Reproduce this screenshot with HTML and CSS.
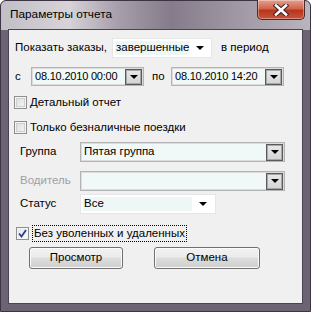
FILE: index.html
```html
<!DOCTYPE html>
<html lang="ru">
<head>
  <meta charset="UTF-8">
  <title>Параметры отчета</title>
  <link rel="stylesheet" href="styles.css">
</head>
<body>
  <div class="window">
    <div class="titlebar">
      <span class="title">Параметры отчета</span>
      <button class="close" aria-label="Закрыть">
        <svg width="16" height="12" viewBox="0 0 16 12">
          <path d="M3 1.5 L13 10.5 M13 1.5 L3 10.5" stroke="#3a2626" stroke-width="4.6" stroke-linecap="square"/>
          <path d="M3 1.5 L13 10.5 M13 1.5 L3 10.5" stroke="#fff" stroke-width="2.6" stroke-linecap="square"/>
        </svg>
      </button>
    </div>

    <div class="client">
      <div class="row r1">
        <span>Показать заказы,</span>
        <div class="combo flat w-state">
          <span class="value">завершенные</span>
          <span class="tri"></span>
        </div>
        <span class="after">в период</span>
      </div>

      <div class="row r2">
        <span class="lbl-c">с</span>
        <div class="field date">
          <span class="value">08.10.2010 00:00</span>
          <span class="drop"><span class="tri"></span></span>
        </div>
        <span class="lbl-po">по</span>
        <div class="field date">
          <span class="value">08.10.2010 14:20</span>
          <span class="drop"><span class="tri"></span></span>
        </div>
      </div>

      <label class="row r3 check">
        <span class="box"></span>
        <span>Детальный отчет</span>
      </label>

      <label class="row r4 check">
        <span class="box"></span>
        <span>Только безналичные поездки</span>
      </label>

      <div class="row r5">
        <span class="lbl">Группа</span>
        <div class="field wide">
          <span class="value">Пятая группа</span>
          <span class="drop"><span class="tri"></span></span>
        </div>
      </div>

      <div class="row r6">
        <span class="lbl disabled">Водитель</span>
        <div class="field wide">
          <span class="value"></span>
          <span class="drop"><span class="tri"></span></span>
        </div>
      </div>

      <div class="row r7">
        <span class="lbl">Статус</span>
        <div class="combo flat w-status">
          <span class="value">Все</span>
          <span class="tri"></span>
        </div>
      </div>

      <label class="row r8 check">
        <span class="box checked">
          <svg width="9" height="9" viewBox="0 0 9 9"><path d="M1 4.5 L3.5 7.5 L8 1" fill="none" stroke="#2a3f8f" stroke-width="1.8"/></svg>
        </span>
        <span class="focus">Без уволенных и удаленных</span>
      </label>

      <div class="row buttons">
        <button class="btn btn-view">Просмотр</button>
        <button class="btn btn-cancel">Отмена</button>
      </div>
    </div>
  </div>
</body>
</html>
```

FILE: styles.css
```css
* { box-sizing: border-box; margin: 0; padding: 0; }
html, body { width: 311px; height: 312px; overflow: hidden; background: #fff; }
body { font: 11.5px/1 "Liberation Sans", Arial, sans-serif; color: #000; white-space: nowrap; }

.window {
  width: 311px; height: 312px;
  border: 1px solid #3c3442;
  border-radius: 6px 6px 0 0;
  padding: 0 7px 7px;
  display: flex; flex-direction: column;
  background:
    linear-gradient(90deg, #c2bec6 0%, #d7d3d9 22%, #a69eaa 38%, #857b8a 55%, #9b929f 72%, #bab4bd 100%) top / 100% 29px no-repeat,
    #6d6473;
}

/* title bar */
.titlebar { height: 28px; display: flex; align-items: center; position: relative; }
.title { font-size: 11.8px; padding-left: 2px; margin-top: -1px; color: #000; }
.close {
  position: absolute; top: -1px; right: -2px;
  width: 48px; height: 20px;
  border: 1px solid #4a2a2a; border-top: none;
  border-radius: 0 0 5px 5px;
  background: linear-gradient(#e4a08e 0%, #d0654c 45%, #b8351c 55%, #c8543a 100%);
  box-shadow: inset 0 0 0 1px rgba(255,255,255,.35);
  display: flex; align-items: center; justify-content: center;
}

/* client area */
.client {
  flex: 1;
  border: 1px solid #4b4350;
  background: #f0f0f0;
  display: flex; flex-direction: column;
}
.row { display: flex; align-items: center; }

.r1 { margin-top: 8px; height: 20px; padding-left: 6px; }
.r2 { margin-top: 9px; height: 19px; padding-left: 6px; }
.r3 { margin-top: 10px; height: 13px; padding-left: 5px; }
.r4 { margin-top: 12px; height: 13px; padding-left: 5px; }
.r5 { margin-top: 8px; height: 20px; padding-left: 11px; }
.r6 { margin-top: 9px; height: 20px; padding-left: 11px; }
.r7 { margin-top: 3px; height: 20px; padding-left: 11px; }
.r8 { margin-top: 11px; height: 17px; padding-left: 7px; }
.buttons { margin-top: 5px; height: 22px; padding-left: 20px; gap: 31px; }

.lbl { width: 60px; }
.lbl.disabled { color: #a0a0a0; }
.lbl-c { width: 16px; }
.lbl-po { margin-left: 8px; width: 19px; }
.after { margin-left: 9px; }

/* triangle */
.tri {
  width: 0; height: 0;
  border-left: 4px solid transparent;
  border-right: 4px solid transparent;
  border-top: 4px solid #000;
}

/* flat combo (white with tinted text part) */
.combo {
  height: 20px;
  margin-left: 5px;
  background: #fff;
  border: 1px solid #e6e6e6;
  display: flex; align-items: center;
  padding: 2px;
}
.combo .value {
  flex: 1; height: 100%;
  background: #eef6f6;
  display: flex; align-items: center;
  padding-left: 1px;
}
.combo .tri { margin: 0 6px 0 7px; }
.w-state { width: 100px; }
.w-status { width: 136px; margin-left: 0; }

/* fields with drop button */
.field {
  height: 20px;
  border: 1px solid #b4b4b4;
  box-shadow: inset 0 0 0 1px #dcdcdc;
  background: #f1f8f8;
  display: flex; align-items: center;
  padding: 1px 1px 1px 2px;
}
.field .value { flex: 1; padding-left: 1px; }
.drop {
  width: 17px; height: 17px;
  border: 1px solid #5a5a5a;
  box-shadow: inset 0 0 0 1px #a8a8a8;
  background: linear-gradient(#e8e8e8, #d4d4d4);
  display: flex; align-items: center; justify-content: center;
}
.date { width: 113px; height: 19px; }
.date .value { font-size: 11px; letter-spacing: -0.2px; overflow: hidden; }
.date .drop { height: 16px; }
.wide { width: 205px; }

/* checkboxes */
.check { gap: 3px; }
.box {
  width: 13px; height: 13px;
  border: 1px solid #8e8f8f;
  background: linear-gradient(135deg, #dcdcdc, #f6f6f6);
  box-shadow: inset 0 0 0 1px #f4f4f4, inset 0 0 0 2px #cfcfcf;
  display: flex; align-items: center; justify-content: center;
}
.box.checked { background: linear-gradient(135deg, #e6e6e6, #fafafa); box-shadow: inset 0 0 0 1px #f4f4f4; }
.focus {
  height: 17px;
  border: 1px dotted #000;
  display: flex; align-items: center;
  padding: 0 1px;
}

/* buttons */
.btn {
  height: 22px;
  font: inherit;
  border: 1px solid #707070;
  border-radius: 3px;
  background: linear-gradient(#f2f2f2 0%, #ebebeb 45%, #dddddd 50%, #cfcfcf 100%);
  box-shadow: inset 0 0 0 1px #fbfbfb;
  color: #000;
}
.btn-view { width: 94px; }
.btn-cancel { width: 106px; }
```
